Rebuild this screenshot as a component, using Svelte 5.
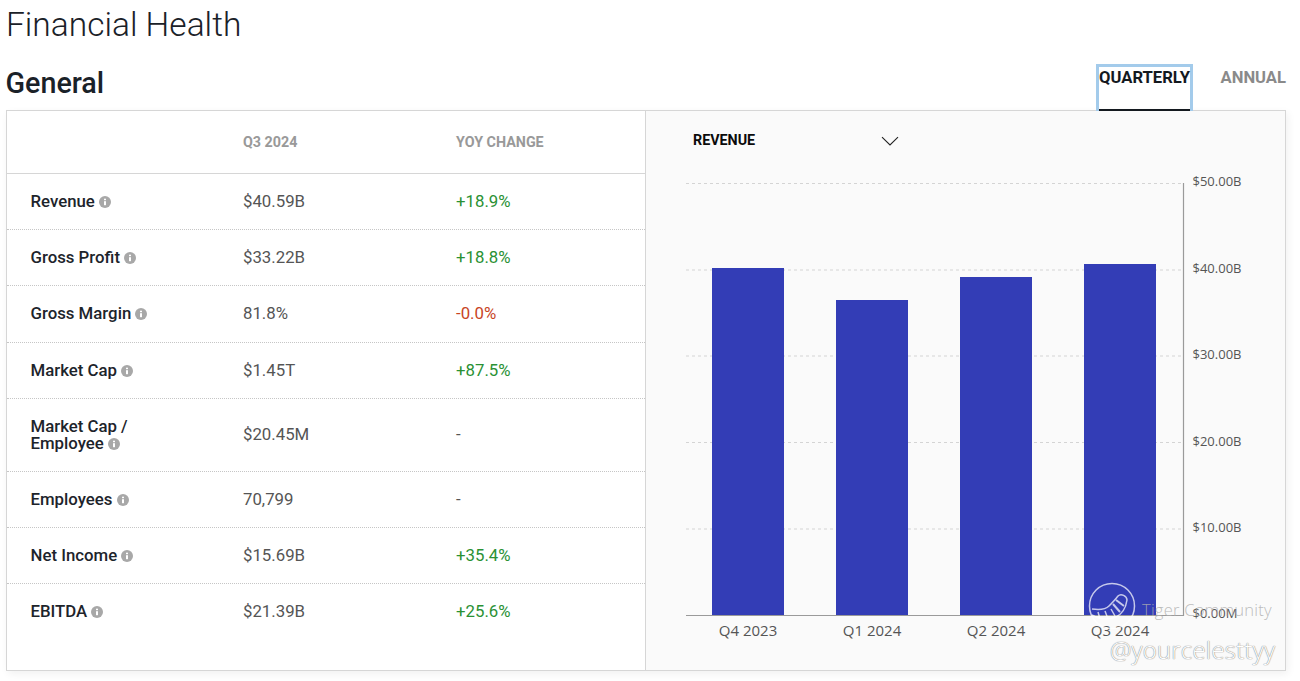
<script>
  const rows = [
    { label: 'Revenue', value: '$40.59B', change: '+18.9%', tone: 'up' },
    { label: 'Gross Profit', value: '$33.22B', change: '+18.8%', tone: 'up' },
    { label: 'Gross Margin', value: '81.8%', change: '-0.0%', tone: 'down' },
    { label: 'Market Cap', value: '$1.45T', change: '+87.5%', tone: 'up' },
    { label: 'Market Cap / Employee', value: '$20.45M', change: '-', tone: 'flat', tall: true },
    { label: 'Employees', value: '70,799', change: '-', tone: 'flat' },
    { label: 'Net Income', value: '$15.69B', change: '+35.4%', tone: 'up' },
    { label: 'EBITDA', value: '$21.39B', change: '+25.6%', tone: 'up' }
  ];
  const bars = [
    { x: 66, top: 157, label: 'Q4 2023' },
    { x: 190, top: 189, label: 'Q1 2024' },
    { x: 314, top: 166, label: 'Q2 2024' },
    { x: 438, top: 153, label: 'Q3 2024' }
  ];
  const ticks = [
    { y: 72.5, ty: 74.5, label: '$50.00B' },
    { y: 159, ty: 162, label: '$40.00B' },
    { y: 245, ty: 248, label: '$30.00B' },
    { y: 331.5, ty: 335, label: '$20.00B' },
    { y: 418, ty: 421, label: '$10.00B' }
  ];
</script>

<main class="page">
  <h1>Financial Health</h1>
  <header class="section-head">
    <h2>General</h2>
    <nav class="tabs">
      <button class="tab active">QUARTERLY</button>
      <button class="tab">ANNUAL</button>
    </nav>
  </header>

  <section class="card">
    <div class="table">
      <div class="row head">
        <div class="c-label"></div>
        <div class="c-value">Q3 2024</div>
        <div class="c-change">YOY CHANGE</div>
      </div>
      {#each rows as r}
        <div class="row" class:tall={r.tall}>
          <div class="c-label name">
            {r.label}
            <svg class="info" viewBox="0 0 12 12" width="12" height="12" aria-hidden="true">
              <circle cx="6" cy="6" r="6" fill="#a8a8a8" />
              <rect x="5" y="5.2" width="2" height="4" fill="#fff" />
              <rect x="5" y="2.7" width="2" height="1.5" fill="#fff" />
            </svg>
          </div>
          <div class="c-value val">{r.value}</div>
          <div class="c-change val {r.tone}">{r.change}</div>
        </div>
      {/each}
    </div>

    <div class="chart-panel">
      <div class="picker">
        <span>REVENUE</span>
        <svg viewBox="0 0 18 10" width="18" height="10" aria-hidden="true">
          <path d="M1 1.2 L9 9 L17 1.2" fill="none" stroke="#222" stroke-width="1.1" />
        </svg>
      </div>
      <svg class="chart" viewBox="0 0 640 530" width="640" height="530">
        {#each ticks as t}
          <line x1="40" x2="537" y1={t.y} y2={t.y} class="grid" />
        {/each}
        {#each bars as b}
          <rect x={b.x} y={b.top} width="72" height={504 - b.top} fill="#333db6" />
          <text x={b.x + 36} y="524.5" text-anchor="middle" class="axis-x">{b.label}</text>
        {/each}
        <path d="M537.5 72 V504.5 H40" fill="none" stroke="#9a9a9a" stroke-width="1.2" />
        {#each ticks as t}
          <text x="546.5" y={t.ty} class="axis-y">{t.label}</text>
        {/each}
        <text x="546.5" y="506.5" class="axis-y">$0.00M</text>
      </svg>
      <div class="watermark" aria-hidden="true">
        <div class="wm-top">
          <svg viewBox="0 0 48 48" width="48" height="48">
            <g fill="none" stroke="#fff" stroke-opacity="0.72" stroke-width="1.5">
              <circle cx="24" cy="24" r="22.5" />
              <path d="M4 27 C11 28 17 28 21 24 C24 21 27 18 30 14 C33 11 39 14 39 18 C38 25 34 32 28 35 C20 38 11 37 4 33" />
              <path d="M28 18 L36 24 M25 22 L32 30" stroke-width="2" />
              <path d="M10 30 L12 37 M17 29 L20 37 M23 27 L27 34" />
            </g>
          </svg>
          <span class="wm-name">Tiger Community</span>
        </div>
        <div class="wm-user">@yourcelesttyy</div>
      </div>
    </div>
  </section>
</main>

<style>
  :global(body) {
    margin: 0;
    background: #fff;
    font-family: Roboto, "Liberation Sans", sans-serif;
  }
  .page {
    width: 1280px;
    height: 681px;
    padding: 0 14px 0 6px;
    overflow: hidden;
  }
  h1 {
    margin: 0;
    height: 48px;
    font-size: 33.5px;
    line-height: 50px;
    font-weight: 300;
    color: #1a2128;
  }
  .section-head {
    height: 62px;
    display: flex;
    justify-content: space-between;
  }
  h2 {
    margin: 17px 0 0 -0.5px;
    font-size: 28.7px;
    line-height: 36px;
    font-weight: 500;
    color: #1a2128;
  }
  .tabs {
    display: flex;
    gap: 26px;
    margin-top: 16px;
    align-items: flex-start;
  }
  .tab {
    display: flex;
    justify-content: flex-end;
    align-items: flex-start;
    width: 67px;
    height: 47px;
    padding: 4px 0 0;
    box-sizing: border-box;
    background: none;
    border: 0;
    font: 700 16.6px/20px Roboto, sans-serif;
    color: #8a8a8a;
    white-space: nowrap;
  }
  .tab.active {
    width: 97px;
    justify-content: center;
    color: #14191f;
    border: 3px solid #a3cbeb;
    border-bottom: 0;
    padding-top: 1px;
    box-shadow: inset 0 -2px 0 #14191f;
  }
  .card {
    width: 1280px;
    height: 561px;
    box-sizing: border-box;
    display: flex;
    border: 1px solid #d6d6d6;
    box-shadow: 2px 3px 8px rgba(0, 0, 0, 0.06);
  }
  .table {
    width: 638px;
    flex: none;
    border-right: 1px solid #d6d6d6;
  }
  .row {
    display: grid;
    grid-template-columns: 236px 213px 1fr;
    align-items: center;
    height: 56.2px;
    box-sizing: border-box;
    border-bottom: 1px dotted #c6c6c6;
  }
  .row:last-child {
    border-bottom-color: transparent;
  }
  .row.tall {
    height: 73px;
  }
  .row.head {
    height: 63px;
    border-bottom: 1px solid #d6d6d6;
    font-size: 14.3px;
    font-weight: 700;
    color: #999;
  }
  .c-label {
    padding-left: 23.5px;
  }
  .name {
    width: 130px;
    font-size: 16.8px;
    line-height: 17px;
    font-weight: 500;
    color: #1d242b;
  }
  .info {
    vertical-align: -1px;
  }
  .val {
    font-size: 16.8px;
    line-height: 17px;
    color: #555;
  }
  .up { color: #2a9134; }
  .down { color: #c8451f; }
  .flat { color: #555; }
  .chart-panel {
    position: relative;
    flex: 1;
    background: #fafafa;
  }
  .picker {
    display: flex;
    justify-content: space-between;
    align-items: center;
    width: 206px;
    margin-left: 47px;
    padding-top: 20px;
    height: 17px;
    font-size: 14.3px;
    font-weight: 700;
    color: #0b0b0b;
  }
  .picker svg {
    margin-top: 3px;
  }
  .chart {
    position: absolute;
    left: 0;
    top: 0;
    display: block;
  }
  .grid {
    stroke: #d4d4d4;
    stroke-width: 1;
    stroke-dasharray: 3 3;
  }
  .axis-x {
    font: 400 15px "Open Sans", sans-serif;
    fill: #555;
  }
  .axis-y {
    font: 400 13px "Open Sans", sans-serif;
    fill: #555;
  }
  .watermark {
    position: absolute;
    left: 442px;
    top: 471px;
    width: 200px;
  }
  .wm-top {
    display: flex;
    align-items: center;
  }
  .wm-name {
    margin: 6px 0 0 6px;
    font: 300 16.6px "Open Sans", sans-serif;
    color: rgba(175, 175, 175, 0.85);
    letter-spacing: 0.2px;
    white-space: nowrap;
  }
  .wm-user {
    margin: 5px 0 0 22px;
    font: 300 24px "Open Sans", sans-serif;
    line-height: 30px;
    color: #fff;
    white-space: nowrap;
    text-shadow: 0 0 1px #888, 0 0 1px #888;
    letter-spacing: 0.2px;
  }
</style>
